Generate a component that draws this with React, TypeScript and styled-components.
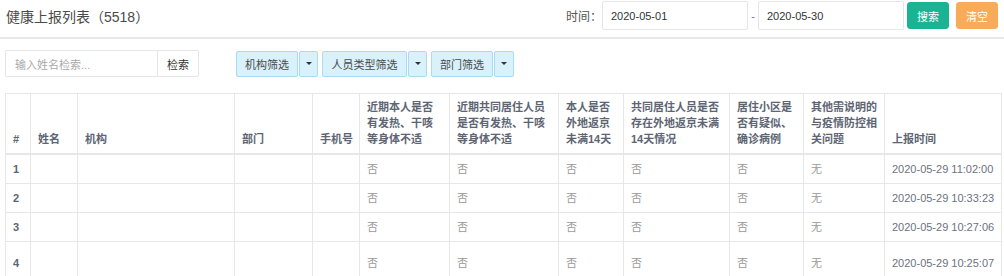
import React from 'react';
import styled, { createGlobalStyle } from 'styled-components';

const GlobalStyle = createGlobalStyle`
  html, body {
    margin: 0;
    padding: 0;
    background: #fff;
  }
  body {
    font-family: "Liberation Sans", "Noto Sans CJK SC", sans-serif;
    font-size: 11px;
    color: #676a6c;
  }
`;

const Page = styled.div`
  width: 1004px;
  height: 276px;
  overflow: hidden;
`;

const TopBar = styled.div`
  display: flex;
  align-items: center;
  justify-content: space-between;
  padding: 0 6px;
  border-bottom: 2px solid #e7eaec;
  box-sizing: border-box;
  height: 39px;
`;

const Title = styled.div`
  font-size: 14px;
  color: #4a4a4a;
  margin-top: -6px;
`;

const DateFilter = styled.div`
  display: flex;
  align-items: center;
  margin-top: -6px;
`;

const Label = styled.span`
  font-size: 12px;
  color: #555;
`;

const DateInput = styled.div`
  width: 146px;
  height: 29px;
  box-sizing: border-box;
  border: 1px solid #e5e6e7;
  border-radius: 2px;
  padding: 0 8px;
  display: flex;
  align-items: center;
  font-size: 11px;
  color: #333;
`;

const Dash = styled.span`
  width: 10px;
  text-align: center;
  color: #777;
`;

const ColorButton = styled.button<{ $bg: string; $gap: number }>`
  height: 27px;
  width: 42px;
  margin-left: ${(p) => p.$gap}px;
  border: 1px solid ${(p) => p.$bg};
  background: ${(p) => p.$bg};
  color: #fff;
  border-radius: 3px;
  font-family: inherit;
  font-size: 11px;
  padding: 0;
`;

const Toolbar = styled.div`
  display: flex;
  align-items: center;
  padding: 11px 5px 0 5px;
  height: 27px;
  gap: 37px;
`;

const Group = styled.div`
  display: flex;
  align-items: center;
`;

const SearchInput = styled.div`
  width: 152px;
  height: 27px;
  box-sizing: border-box;
  border: 1px solid #e5e6e7;
  border-right: none;
  border-radius: 2px 0 0 2px;
  padding: 0 9px;
  display: flex;
  align-items: center;
  font-size: 11px;
  color: #aaa;
`;

const PlainButton = styled.button`
  height: 27px;
  width: 42px;
  box-sizing: border-box;
  border: 1px solid #e5e6e7;
  background: #fff;
  color: #333;
  border-radius: 0 2px 2px 0;
  font-family: inherit;
  font-size: 11px;
  padding: 0;
`;

const SplitWrap = styled.div`
  display: flex;
  margin-right: 4px;
`;

const FilterButton = styled.button<{ $w: number }>`
  height: 26px;
  width: ${(p) => p.$w}px;
  box-sizing: border-box;
  border: 1px solid #a9dcf1;
  background: #d8f1fb;
  color: #4a4a4a;
  border-radius: 2px;
  font-family: inherit;
  font-size: 11px;
  padding: 0;
`;

const CaretButton = styled(FilterButton)`
  margin-left: 1px;
  display: flex;
  align-items: center;
  justify-content: center;
`;

const Caret = styled.span`
  width: 0;
  height: 0;
  border-left: 3px solid transparent;
  border-right: 3px solid transparent;
  border-top: 3px solid #333;
`;

const TableWrap = styled.div`
  padding: 16px 3px 0 5px;
`;

const Table = styled.table`
  border-collapse: collapse;
  table-layout: fixed;
  width: 996px;
`;

const Th = styled.th`
  border: 1px solid #e7e7e7;
  border-bottom-width: 2px;
  text-align: left;
  vertical-align: bottom;
  font-weight: bold;
  color: #5d6573;
  font-size: 11px;
  line-height: 16px;
  padding: 5px 6px 6px 7px;
`;

const Td = styled.td<{ $tall?: boolean; $strong?: boolean }>`
  border: 1px solid #e7e7e7;
  font-size: 11px;
  font-weight: ${(p) => (p.$strong ? 'bold' : 'normal')};
  color: ${(p) => (p.$strong ? '#5d6573' : '#9a9a9a')};
  line-height: 16px;
  padding: 0 6px 0 7px;
  height: ${(p) => (p.$tall ? 42 : 28)}px;
  white-space: nowrap;
`;

const TimeTd = styled(Td)`
  color: #6b7280;
`;

const widths = [25, 47, 157, 78, 47, 90, 109, 65, 106, 74, 81, 117];

const headers = [
  '#',
  '姓名',
  '机构',
  '部门',
  '手机号',
  '近期本人是否有发热、干咳等身体不适',
  '近期共同居住人员是否有发热、干咳等身体不适',
  '本人是否外地返京未满14天',
  '共同居住人员是否存在外地返京未满14天情况',
  '居住小区是否有疑似、确诊病例',
  '其他需说明的与疫情防控相关问题',
  '上报时间',
];

const rows = [
  { id: 1, time: '2020-05-29 11:02:00' },
  { id: 2, time: '2020-05-29 10:33:23' },
  { id: 3, time: '2020-05-29 10:27:06' },
  { id: 4, time: '2020-05-29 10:25:07', tall: true },
];

export default function App() {
  return (
    <Page>
      <GlobalStyle />
      <TopBar>
        <Title>健康上报列表（5518）</Title>
        <DateFilter>
          <Label>时间：</Label>
          <DateInput>2020-05-01</DateInput>
          <Dash>-</Dash>
          <DateInput>2020-05-30</DateInput>
          <ColorButton $bg="#1ab394" $gap={3}>搜索</ColorButton>
          <ColorButton $bg="#f8ac59" $gap={7}>清空</ColorButton>
        </DateFilter>
      </TopBar>

      <Toolbar>
        <Group>
          <SearchInput>输入姓名检索...</SearchInput>
          <PlainButton>检索</PlainButton>
        </Group>
        <Group>
          <SplitWrap>
            <FilterButton $w={62}>机构筛选</FilterButton>
            <CaretButton $w={19}><Caret /></CaretButton>
          </SplitWrap>
          <SplitWrap>
            <FilterButton $w={85}>人员类型筛选</FilterButton>
            <CaretButton $w={19}><Caret /></CaretButton>
          </SplitWrap>
          <SplitWrap>
            <FilterButton $w={62}>部门筛选</FilterButton>
            <CaretButton $w={20}><Caret /></CaretButton>
          </SplitWrap>
        </Group>
      </Toolbar>

      <TableWrap>
        <Table>
          <colgroup>
            {widths.map((w, i) => (
              <col key={i} style={{ width: w }} />
            ))}
          </colgroup>
          <thead>
            <tr>
              {headers.map((h) => (
                <Th key={h}>{h}</Th>
              ))}
            </tr>
          </thead>
          <tbody>
            {rows.map((r) => (
              <tr key={r.id}>
                <Td $tall={r.tall} $strong>{r.id}</Td>
                <Td $tall={r.tall} />
                <Td $tall={r.tall} />
                <Td $tall={r.tall} />
                <Td $tall={r.tall} />
                <Td $tall={r.tall}>否</Td>
                <Td $tall={r.tall}>否</Td>
                <Td $tall={r.tall}>否</Td>
                <Td $tall={r.tall}>否</Td>
                <Td $tall={r.tall}>否</Td>
                <Td $tall={r.tall}>无</Td>
                <TimeTd $tall={r.tall}>{r.time}</TimeTd>
              </tr>
            ))}
          </tbody>
        </Table>
      </TableWrap>
    </Page>
  );
}
